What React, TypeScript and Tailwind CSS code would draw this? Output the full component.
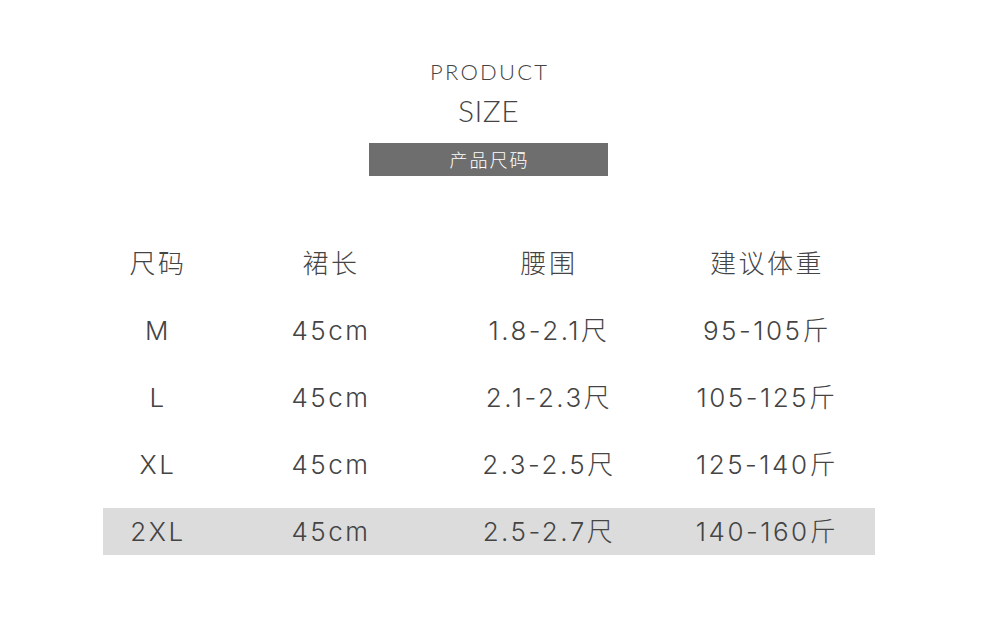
import React from "react";

const rows = [
  { size: "M", len: "45cm", waist: "1.8-2.1尺", weight: "95-105斤" },
  { size: "L", len: "45cm", waist: "2.1-2.3尺", weight: "105-125斤" },
  { size: "XL", len: "45cm", waist: "2.3-2.5尺", weight: "125-140斤" },
  { size: "2XL", len: "45cm", waist: "2.5-2.7尺", weight: "140-160斤", hl: true },
];

const cell = "flex items-center justify-center";

const App = () => {
  return (
    <div
      className="w-[990px] h-[642px] bg-white text-[#444] overflow-hidden"
      style={{ fontFamily: '"Noto Sans CJK SC", sans-serif' }}
    >
      <div className="w-[977px] flex flex-col items-center pt-[58px]">
        <div
          className="text-[22px] leading-[28px] tracking-[2.2px] pl-[2.2px] font-light text-[#444]"
          style={{ fontFamily: 'Lato, "Noto Sans CJK SC", sans-serif' }}
        >
          PRODUCT
        </div>
        <div
          className="mt-[7px] text-[30px] leading-[34px] tracking-[0.5px] font-light text-[#444]"
          style={{ fontFamily: 'Lato, "Noto Sans CJK SC", sans-serif' }}
        >
          SIZE
        </div>
        <div className="mt-[16px] w-[239px] h-[33px] bg-[#6e6e6e] flex items-center justify-center text-white text-[18px] font-light tracking-[2px] pl-[2px]">
          产品尺码
        </div>
      </div>

      <div className="ml-[103px] mt-[64px] w-[772px] text-[26px] font-light">
        {[{ size: "尺码", len: "裙长", waist: "腰围", weight: "建议体重" }, ...rows].map((r: any, i) => (
          <div
            key={i}
            className={`grid grid-cols-[108px_238px_198px_228px] h-[47px] tracking-[2.5px] ${i > 0 ? "mt-[20px]" : ""} ${
              r.hl ? "bg-[#dcdcdc]" : ""
            }`}
            style={{ fontFamily: 'Inter, "Noto Sans CJK SC", sans-serif' }}
          >
            <div className={`${cell} pl-[2px]`}>{r.size}</div>
            <div className={`${cell} pl-[2px]`}>{r.len}</div>
            <div className={`${cell} pl-[2px]`}>{r.waist}</div>
            <div className={`${cell} pl-[12px]`}>{r.weight}</div>
          </div>
        ))}
      </div>
    </div>
  );
};

export default App;
